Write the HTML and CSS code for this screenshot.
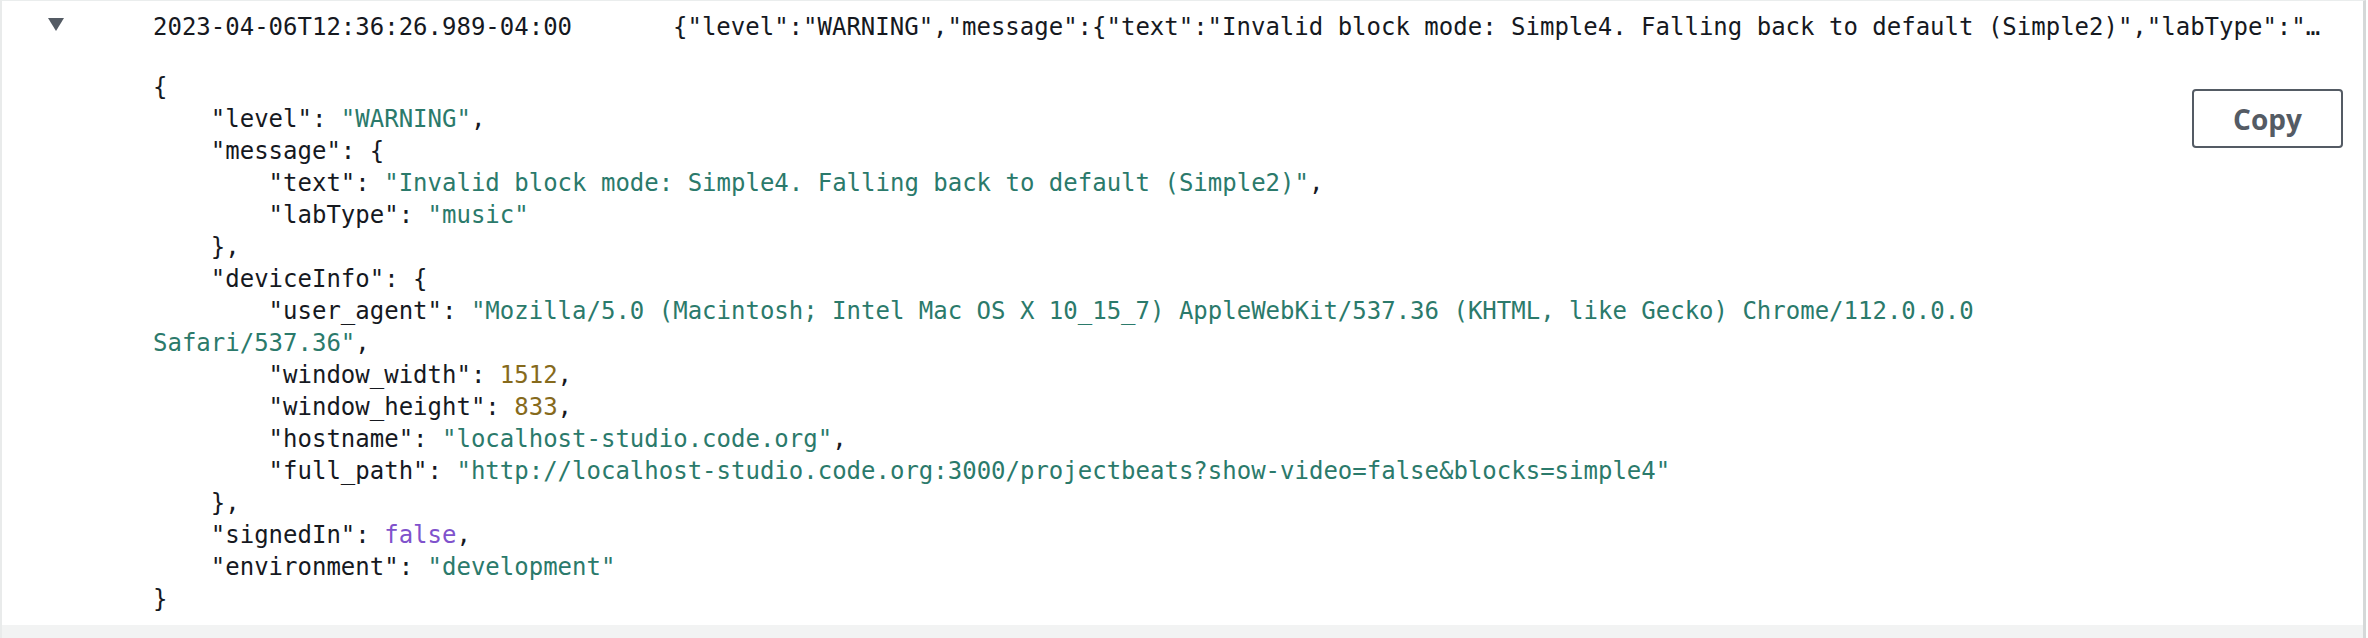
FILE: index.html
```html
<!DOCTYPE html>
<html>
<head>
<meta charset="utf-8">
<link rel="stylesheet" href="styles.css">
</head>
<body>
<div class="panel">
  <div class="summary">
    <div class="toggle"><svg class="caret" width="16" height="13" viewBox="0 0 16 13"><path d="M0 0 L16 0 L8 13 Z" fill="#545b64"/></svg></div>
    <div class="stamp">2023-04-06T12:36:26.989-04:00</div>
    <div class="msg">{"level":"WARNING","message":{"text":"Invalid block mode: Simple4. Falling back to default (Simple2)","labType":"music"},"deviceInfo":{"user_agent":"Mozilla/5.0 (Macintosh; Intel Mac OS X 10_15_7) AppleWebKit/537.36 (KHTML, like Gecko) Chrome/112.0.0.0 Safari/537.36"}}</div>
  </div>
  <div class="details">
<pre class="json">{
    <span class="k">"level"</span>: <span class="s">"WARNING"</span>,
    <span class="k">"message"</span>: {
        <span class="k">"text"</span>: <span class="s">"Invalid block mode: Simple4. Falling back to default (Simple2)"</span>,
        <span class="k">"labType"</span>: <span class="s">"music"</span>
    },
    <span class="k">"deviceInfo"</span>: {
        <span class="k">"user_agent"</span>: <span class="s">"Mozilla/5.0 (Macintosh; Intel Mac OS X 10_15_7) AppleWebKit/537.36 (KHTML, like Gecko) Chrome/112.0.0.0 Safari/537.36"</span>,
        <span class="k">"window_width"</span>: <span class="n">1512</span>,
        <span class="k">"window_height"</span>: <span class="n">833</span>,
        <span class="k">"hostname"</span>: <span class="s">"localhost-studio.code.org"</span>,
        <span class="k">"full_path"</span>: <span class="s">"http://localhost-studio.code.org:3000/projectbeats?show-video=false&amp;blocks=simple4"</span>
    },
    <span class="k">"signedIn"</span>: <span class="b">false</span>,
    <span class="k">"environment"</span>: <span class="s">"development"</span>
}</pre>
    <button class="copy">Copy</button>
  </div>
  <div class="next-row"></div>
</div>
</body>
</html>
```
FILE: styles.css
```css
html, body {
  margin: 0;
  padding: 0;
  background: #ffffff;
}

.panel {
  width: 2366px;
  box-sizing: border-box;
  border-top: 1px solid #eaeded;
  border-left: 2px solid #e9ebeb;
  border-right: 3px solid #d5d8d8;
  background: #ffffff;
}

.summary {
  display: grid;
  grid-template-columns: 151px 520px 1fr;
  align-items: center;
  height: 32px;
  margin-top: 10px;
  padding-right: 34px;
  font-family: "DejaVu Sans Mono", monospace;
  font-size: 24px;
  line-height: 32px;
  color: #16191f;
}

.toggle {
  display: flex;
  align-items: center;
  padding-left: 46px;
  height: 32px;
}

.caret {
  display: block;
  margin-top: -6px;
}

.stamp {
  white-space: nowrap;
}

.msg {
  white-space: nowrap;
  overflow: hidden;
  text-overflow: ellipsis;
}

.details {
  display: flex;
  align-items: flex-start;
  gap: 30px;
  margin-top: 28px;
  padding-left: 151px;
  padding-right: 20px;
  padding-bottom: 10px;
}

.json {
  flex: 1;
  margin: 0;
  font-family: "DejaVu Sans Mono", monospace;
  font-size: 24px;
  line-height: 32px;
  color: #16191f;
  white-space: pre-wrap;
  word-break: normal;
}

.k { color: #16191f; }
.s { color: #2b7a6b; }
.n { color: #866a1c; }
.b { color: #8052cc; }

.copy {
  flex: none;
  margin-top: 18px;
  width: 151px;
  height: 59px;
  box-sizing: border-box;
  border: 2px solid #545b64;
  border-radius: 4px;
  background: #ffffff;
  color: #545b64;
  font-family: "Open Sans", "Noto Sans", sans-serif;
  font-weight: 700;
  font-size: 28px;
  line-height: 1;
  padding: 0;
}

.next-row {
  height: 13px;
  background: #f2f3f3;
}
```
